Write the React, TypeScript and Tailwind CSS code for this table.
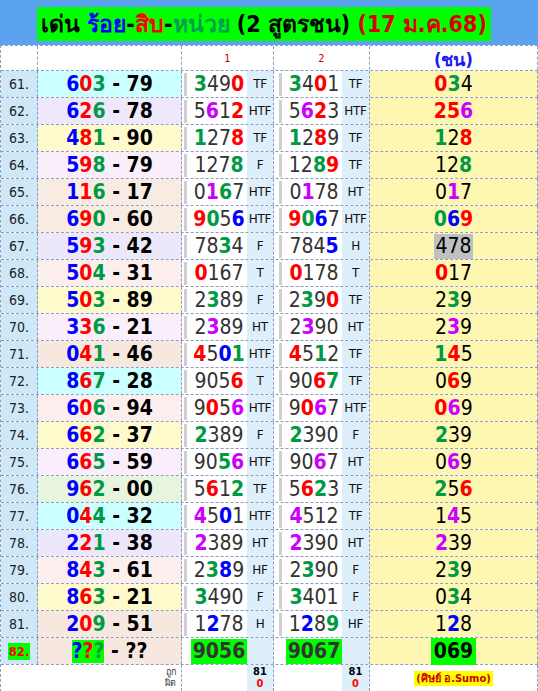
import React from "react";

const B = "border-dashed border-[#8d9cc0]";

const CM: Record<string, string> = {
  g: "text-[#009944] font-bold",
  r: "text-[#ff0000] font-bold",
  b: "text-[#0000ff] font-bold",
  p: "text-[#cc00ff] font-bold",
};

function Digits({ spec }: { spec: string }) {
  const out: React.ReactNode[] = [];
  let i = 0;
  let k = 0;
  while (i < spec.length) {
    const ch = spec[i];
    const nx = spec[i + 1];
    if (nx && CM[nx]) {
      out.push(
        <span key={k++} className={CM[nx]}>
          {ch}
        </span>
      );
      i += 2;
    } else {
      out.push(<span key={k++}>{ch}</span>);
      i += 1;
    }
  }
  return <>{out}</>;
}

type Row = {
  n: string;
  h: string;
  t: string;
  bg: string;
  c1: string;
  f1: string;
  c2: string;
  f2: string;
  r: string;
};

const rows: Row[] = [
  { n: "61", h: "603", t: "79", bg: "bg-[#ccffff]", c1: "3g490r", f1: "TF", c2: "3g40r1", f2: "TF", r: "0r3g4" },
  { n: "62", h: "626", t: "78", bg: "bg-[#efe7fa]", c1: "56p12r", f1: "HTF", c2: "56p2r3", f2: "HTF", r: "2r5r6p" },
  { n: "63", h: "481", t: "90", bg: "bg-[#fffacc]", c1: "1g278r", f1: "TF", c2: "1g28r9", f2: "TF", r: "1g28r" },
  { n: "64", h: "598", t: "79", bg: "bg-[#f9eefa]", c1: "1278g", f1: "F", c2: "128g9r", f2: "TF", r: "128g" },
  { n: "65", h: "116", t: "17", bg: "bg-[#f8ebe1]", c1: "01p6g7", f1: "HTF", c2: "01p78", f2: "HT", r: "01p7" },
  { n: "66", h: "690", t: "60", bg: "bg-[#f8ebe1]", c1: "9r0g56b", f1: "HTF", c2: "9r0g6b7", f2: "HTF", r: "0g6b9r" },
  { n: "67", h: "593", t: "42", bg: "bg-[#ede7fa]", c1: "783g4", f1: "F", c2: "7845b", f2: "H", r: "478" },
  { n: "68", h: "504", t: "31", bg: "bg-[#fdeeee]", c1: "0r167", f1: "T", c2: "0r178", f2: "T", r: "0r17" },
  { n: "69", h: "503", t: "89", bg: "bg-[#fffacc]", c1: "23g89", f1: "F", c2: "23g90r", f2: "TF", r: "23g9" },
  { n: "70", h: "336", t: "21", bg: "bg-[#f9eefa]", c1: "23p89", f1: "HT", c2: "23p90", f2: "HT", r: "23p9" },
  { n: "71", h: "041", t: "46", bg: "bg-[#f6e8df]", c1: "4r50b1g", f1: "HTF", c2: "4r51g2", f2: "TF", r: "1g4r5" },
  { n: "72", h: "867", t: "28", bg: "bg-[#ccffff]", c1: "9056r", f1: "T", c2: "906r7g", f2: "TF", r: "06r9" },
  { n: "73", h: "606", t: "94", bg: "bg-[#fdeeee]", c1: "90r56p", f1: "HTF", c2: "90r6p7", f2: "HTF", r: "0r6p9" },
  { n: "74", h: "662", t: "37", bg: "bg-[#fffacc]", c1: "2g389", f1: "F", c2: "2g390", f2: "F", r: "2g39" },
  { n: "75", h: "665", t: "59", bg: "bg-[#f9eefa]", c1: "905g6p", f1: "HTF", c2: "906p7", f2: "HT", r: "06p9" },
  { n: "76", h: "962", t: "00", bg: "bg-[#e8f5de]", c1: "56r12g", f1: "TF", c2: "56r2g3", f2: "TF", r: "2g56r" },
  { n: "77", h: "044", t: "32", bg: "bg-[#ccffff]", c1: "4p50b1", f1: "HTF", c2: "4p512", f2: "TF", r: "14p5" },
  { n: "78", h: "221", t: "38", bg: "bg-[#ede7fa]", c1: "2p389", f1: "HT", c2: "2p390", f2: "HT", r: "2p39" },
  { n: "79", h: "843", t: "61", bg: "bg-[#fdeeee]", c1: "23g8b9", f1: "HF", c2: "23g90", f2: "F", r: "23g9" },
  { n: "80", h: "863", t: "21", bg: "bg-[#fffacc]", c1: "3g490", f1: "F", c2: "3g401", f2: "F", r: "03g4" },
  { n: "81", h: "209", t: "51", bg: "bg-[#f6e8df]", c1: "12b78", f1: "H", c2: "12b89g", f2: "HF", r: "12b8" },
];

function Bar({ ml }: { ml: string }) {
  return <div className={`w-[3px] h-[23px] bg-[#cfcfcf] ${ml}`} />;
}

const TF = "flex-1 h-full bg-[#ddeffb] flex items-center justify-center text-[12px] text-[#111] font-['DejaVu_Sans',sans-serif] tracking-[-0.3px]";

function DataRow({ row }: { row: Row }) {
  return (
    <div className={`flex h-[27px] border-b ${B}`}>
      <div className={`w-[37px] border-r ${B} bg-[#cfe8f8] flex items-center justify-center text-[14px] text-[#222]`}>
        {row.n}.
      </div>
      <div className={`w-[144px] border-r ${B} ${row.bg} flex items-center justify-center text-[21px] font-bold leading-none whitespace-pre`}>
        <span className="text-[#0000ff]">{row.h[0]}</span>
        <span className="text-[#ff0000]">{row.h[1]}</span>
        <span className="text-[#009944]">{row.h[2]}</span>
        <span className="text-black">{" - " + row.t}</span>
      </div>
      <div className={`w-[92px] border-r ${B} flex items-center bg-white`}>
        <Bar ml="ml-[2px]" />
        <div className="w-[56px] ml-[4px] h-full flex items-center justify-center text-[21px] text-[#333] leading-none">
          <Digits spec={row.c1} />
        </div>
        <div className={TF}>{row.f1}</div>
      </div>
      <div className={`w-[96px] border-r ${B} flex items-center bg-white`}>
        <Bar ml="ml-[5px]" />
        <div className="w-[56px] ml-[4px] h-full flex items-center justify-center text-[21px] text-[#333] leading-none">
          <Digits spec={row.c2} />
        </div>
        <div className={TF}>{row.f2}</div>
      </div>
      <div className={`flex-1 border-r ${B} bg-[#fdf7b2] flex items-center justify-center text-[21px] text-black leading-none`}>
        {row.n === "67" ? (
          <span className="bg-[#c0c0c0] px-[1px] py-[2px]">478</span>
        ) : (
          <Digits spec={row.r} />
        )}
      </div>
    </div>
  );
}

export default function App() {
  return (
    <div className="w-[538px] h-[691px] overflow-hidden bg-white font-['DejaVu_Sans_Condensed','DejaVu_Sans',Tahoma,sans-serif]">
      <div className="h-[45px] bg-[#5ba2ef] pt-[7px]">
        <div className="ml-[37px] w-[454px] h-[34px] bg-[#00ff00] flex items-center justify-center text-[23px] font-bold leading-none whitespace-pre">
          <span className="text-black">เด่น </span>
          <span className="text-[#0000ff]">ร้อย</span>
          <span className="text-black">-</span>
          <span className="text-[#ff0000]">สิบ</span>
          <span className="text-black">-</span>
          <span className="text-[#00a050]">หน่วย</span>
          <span className="text-black"> (2 สูตรชน) </span>
          <span className="text-[#dd0000]">(17 ม.ค.68)</span>
        </div>
      </div>
      <div className={`border-l border-t ${B}`}>
        <div className={`flex h-[25px] border-b ${B}`}>
          <div className={`w-[37px] border-r ${B} bg-white`} />
          <div className={`w-[144px] border-r ${B} bg-white`} />
          <div className={`w-[92px] border-r ${B} bg-white flex items-end justify-center pb-[3px] text-[11px] text-[#cc0000]`}>1</div>
          <div className={`w-[96px] border-r ${B} bg-white flex items-end justify-center pb-[3px] text-[11px] text-[#cc0000]`}>2</div>
          <div className={`flex-1 border-r ${B} bg-white flex items-center justify-center pt-[2px] text-[18px] font-bold text-[#1a1aee]`}>(ชน)</div>
        </div>
        {rows.map((r) => (
          <DataRow key={r.n} row={r} />
        ))}
        <div className={`flex h-[27px] border-b ${B}`}>
          <div className={`w-[37px] border-r ${B} bg-[#cfe8f8] flex items-center justify-center`}>
            <span className="bg-[#00ff00] text-[#ff0000] font-bold text-[13px] px-[1px] leading-[17px]">82.</span>
          </div>
          <div className={`w-[144px] border-r ${B} bg-[#f6e8df] flex items-center justify-center text-[21px] font-bold leading-none whitespace-pre`}>
            <span className="bg-[#00ff00] py-[1px]">
              <span className="text-[#0000ff]">?</span>
              <span className="text-[#ff0000]">?</span>
              <span className="text-[#009944]">?</span>
            </span>
            <span className="text-black"> - ??</span>
          </div>
          <div className={`w-[92px] border-r ${B} flex items-center bg-white`}>
            <div className="w-[6px]" />
            <div className="w-[56px] ml-[3px] h-full flex items-center justify-center">
              <span className="bg-[#00ff00] text-[21px] font-bold text-[#333] leading-none px-[2px] py-[2px]">9056</span>
            </div>
            <div className="flex-1 h-full bg-[#ddeffb]" />
          </div>
          <div className={`w-[96px] border-r ${B} flex items-center bg-white`}>
            <div className="w-[8px]" />
            <div className="w-[56px] ml-[4px] h-full flex items-center justify-center">
              <span className="bg-[#00ff00] text-[21px] font-bold text-[#333] leading-none px-[2px] py-[2px]">9067</span>
            </div>
            <div className="flex-1 h-full bg-[#ddeffb]" />
          </div>
          <div className={`flex-1 border-r ${B} bg-[#fdf7b2] flex items-center justify-center`}>
            <span className="bg-[#00ff00] text-[21px] font-bold text-black leading-none px-[3px] py-[3px]">069</span>
          </div>
        </div>
        <div className={`flex h-[27px] border-b ${B}`}>
          <div className={`w-[181px] border-r ${B} bg-white flex flex-col items-end justify-center pr-[5px] text-[9px] leading-[11px] text-[#333]`}>
            <span>ถูก</span>
            <span>ผิด</span>
          </div>
          <div className={`w-[92px] border-r ${B} flex bg-white`}>
            <div className="w-[65px]" />
            <div className="flex-1 bg-[#ddeffb] flex flex-col items-center justify-center text-[11px] font-bold leading-[12px]">
              <span className="text-black">81</span>
              <span className="text-[#ff0000]">0</span>
            </div>
          </div>
          <div className={`w-[96px] border-r ${B} flex bg-white`}>
            <div className="w-[68px]" />
            <div className="flex-1 bg-[#ddeffb] flex flex-col items-center justify-center text-[11px] font-bold leading-[12px]">
              <span className="text-black">81</span>
              <span className="text-[#ff0000]">0</span>
            </div>
          </div>
          <div className={`flex-1 border-r ${B} bg-white flex items-center justify-center`}>
            <span className="bg-[#ffff00] text-[#cc0000] font-bold text-[11px] px-[2px] leading-[15px]">(ศิษย์ อ.Sumo)</span>
          </div>
        </div>
      </div>
    </div>
  );
}
